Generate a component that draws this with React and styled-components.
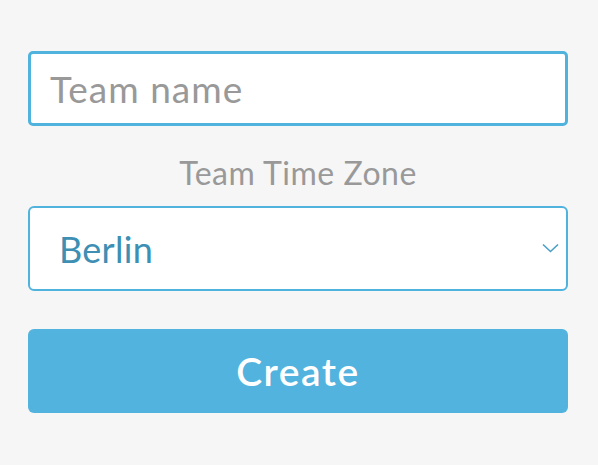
import React, { useState } from 'react';
import styled, { createGlobalStyle } from 'styled-components';

const GlobalStyle = createGlobalStyle`
  html, body {
    margin: 0;
    padding: 0;
    background: #f6f6f6;
  }
  body {
    font-family: "Lato", "Open Sans", sans-serif;
  }
`;

const Page = styled.div`
  min-height: 465px;
  padding: 51px 30px 0 28px;
  box-sizing: border-box;
`;

const Form = styled.form`
  display: flex;
  flex-direction: column;
  width: 540px;
`;

const NameInput = styled.input`
  box-sizing: border-box;
  width: 100%;
  height: 75px;
  padding: 0 19px;
  border: 3px solid #4fb3de;
  border-radius: 5px;
  background: #fff;
  font-family: inherit;
  font-size: 37px;
  letter-spacing: 1px;
  color: #3d8fb3;
  outline: none;

  &::placeholder {
    color: #999;
  }
`;

const Label = styled.label`
  display: block;
  text-align: center;
  color: #999;
  font-size: 32px;
  letter-spacing: 0.5px;
  line-height: 1;
  padding: 31px 0 17px;
`;

const SelectWrap = styled.div`
  position: relative;
  height: 85px;
`;

const Select = styled.select`
  box-sizing: border-box;
  width: 100%;
  height: 100%;
  padding: 0 40px 0 29px;
  border: 2px solid #4fb3de;
  border-radius: 6px;
  background: #fff;
  appearance: none;
  font-family: inherit;
  font-size: 36px;
  letter-spacing: 0.3px;
  color: #3d8fb3;
  outline: none;
`;

const Chevron = styled.svg`
  position: absolute;
  right: 9px;
  top: 37px;
  width: 17px;
  height: 10px;
  pointer-events: none;
`;

const CreateButton = styled.button`
  margin-top: 38px;
  height: 84px;
  border: none;
  border-radius: 6px;
  background: #52b3de;
  color: #fff;
  font-family: inherit;
  font-size: 39px;
  font-weight: 600;
  letter-spacing: 1.5px;
  cursor: pointer;
`;

export default function App() {
  const [zone, setZone] = useState('Berlin');

  return (
    <>
      <GlobalStyle />
      <Page>
        <Form onSubmit={(e) => e.preventDefault()}>
          <NameInput placeholder="Team name" />
          <Label htmlFor="tz">Team Time Zone</Label>
          <SelectWrap>
            <Select id="tz" value={zone} onChange={(e) => setZone(e.target.value)}>
              <option>Berlin</option>
              <option>London</option>
              <option>New York</option>
              <option>Tokyo</option>
            </Select>
            <Chevron viewBox="0 0 17 10">
              <path d="M1 1.5 L8.5 8.5 L16 1.5" fill="none" stroke="#4a9fc8" strokeWidth="1.6" />
            </Chevron>
          </SelectWrap>
          <CreateButton type="submit">Create</CreateButton>
        </Form>
      </Page>
    </>
  );
}
